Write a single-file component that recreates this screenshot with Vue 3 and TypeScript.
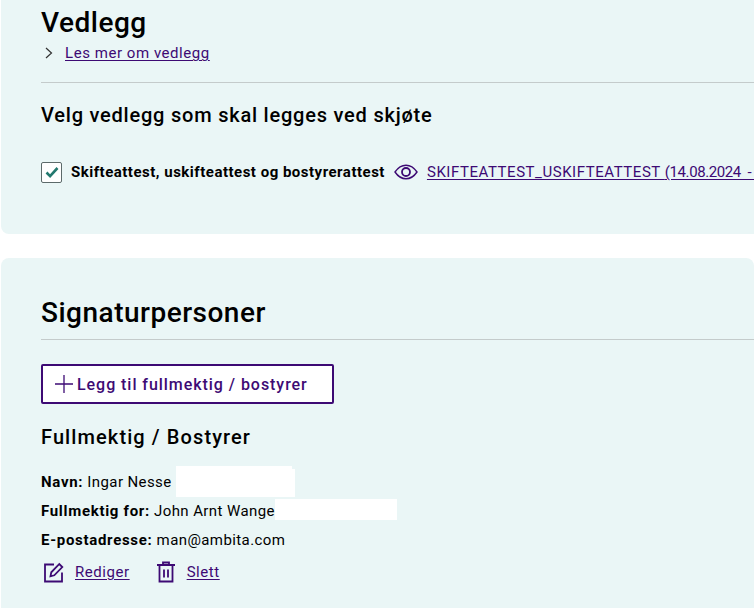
<script setup lang="ts">
const details = [
  { label: 'Navn:', value: 'Ingar Nesse', mask: 'mask-name' },
  { label: 'Fullmektig for:', value: 'John Arnt Wange', mask: 'mask-for' },
  { label: 'E-postadresse:', value: 'man@ambita.com', mask: '' },
]
</script>

<template>
  <main class="page">
    <section class="card card--attachments">
      <h2 class="title">Vedlegg</h2>
      <div class="more">
        <svg class="more__chevron" width="10" height="12" viewBox="0 0 10 12" fill="none">
          <path d="M2 1l5.5 5L2 11" stroke="#333" stroke-width="1.2" />
        </svg>
        <a class="link" href="#">Les mer om vedlegg</a>
      </div>
      <hr class="rule rule--attachments" />
      <h3 class="subtitle">Velg vedlegg som skal legges ved skjøte</h3>
      <div class="attachment">
        <span class="check">
          <svg width="14" height="12" viewBox="0 0 14 12" fill="none">
            <path d="M1.5 6.5l3.6 3.6L12.5 2" stroke="#23796f" stroke-width="2.6" />
          </svg>
        </span>
        <strong class="attachment__label">Skifteattest, uskifteattest og bostyrerattest</strong>
        <svg class="eye" width="24" height="16" viewBox="0 0 24 16" fill="none" stroke="#3d0a74">
          <path d="M1 8c3-4.400 6.800-6.800 11-6.800S20 3.600 23 8c-3 4.400-6.800 6.800-11 6.800S4 12.400 1 8z" stroke-width="1.400" />
          <circle cx="12" cy="8" r="4" stroke-width="1.800" />
        </svg>
        <a class="link link--file" href="#">SKIFTEATTEST_USKIFTEATTEST <span class="link__date">(14.08.2024 &nbsp;- 10.32.pdf)</span></a>
      </div>
    </section>

    <section class="card card--signers">
      <h2 class="title">Signaturpersoner</h2>
      <hr class="rule" />
      <button class="add" type="button">
        <svg width="20" height="20" viewBox="0 0 20 20" stroke="#3d0a74" stroke-width="1.300">
          <path d="M10 1v18M1 10h18" />
        </svg>
        Legg til fullmektig / bostyrer
      </button>
      <h3 class="person">Fullmektig / Bostyrer</h3>
      <div class="details">
        <p v-for="row in details" :key="row.label" class="details__row">
          <strong class="details__label">{{ row.label }}</strong> {{ row.value }}
          <span v-if="row.mask" class="mask" :class="row.mask"></span>
        </p>
      </div>
      <div class="actions">
        <span class="action">
          <svg width="22" height="22" viewBox="0 0 22 22" fill="none" stroke="#3d0a74" stroke-width="1.800">
            <path d="M11 3.500H2v17h17v-9" />
            <path d="M7.500 15.300l.8-4 8-8.300 3 3-8 8.300z" />
          </svg>
          <a class="link" href="#">Rediger</a>
        </span>
        <span class="action">
          <svg width="21" height="22" viewBox="0 0 21 22" fill="none" stroke="#3d0a74" stroke-width="1.800">
            <path d="M1 4h18M7 4V1.500h6V4M3.500 4v16.500h13V4M8 8.500v8M12 8.500v8" />
          </svg>
          <a class="link" href="#">Slett</a>
        </span>
      </div>
    </section>
  </main>
</template>

<style>
html,
body {
  background: #fff;
  overflow: hidden;
}
</style>

<style scoped>
.page {
  width: 754px;
  height: 608px;
  overflow: hidden;
  padding-left: 1px;
  box-sizing: border-box;
  font-family: Roboto, "Liberation Sans", sans-serif;
  color: #000;
}

.card {
  background: #eaf6f6;
  padding-left: 40px;
  border-radius: 8px;
  overflow: hidden;
}

.card--attachments {
  height: 234px;
  border-radius: 0 0 0 8px;
  box-sizing: border-box;
}

.card--signers {
  margin-top: 24px;
  height: 360px;
  box-sizing: border-box;
}

.title {
  margin: 0;
  font-size: 28px;
  font-weight: 500;
  line-height: 32px;
  letter-spacing: 0.5px;
}

.card--attachments .title {
  padding-top: 7px;
}

.card--signers .title {
  padding-top: 39px;
}

.more {
  display: flex;
  align-items: center;
  gap: 11px;
  margin-top: 4px;
  padding-left: 3px;
  height: 20px;
}

.link {
  color: #3d0a74;
  font-size: 15px;
  letter-spacing: 0.55px;
  text-decoration: underline;
  text-decoration-thickness: 1px;
  text-underline-offset: 2px;
}

.link__date {
  letter-spacing: -0.4px;
}

.rule {
  margin: 10px 0 0;
  border: 0;
  border-top: 1px solid #c4cbcb;
}

.rule--attachments {
  margin-top: 19px;
}

.subtitle {
  margin: 20px 0 0;
  font-size: 20px;
  font-weight: 500;
  line-height: 24px;
  letter-spacing: 0.78px;
}

.attachment {
  display: flex;
  align-items: center;
  margin-top: 34px;
  white-space: nowrap;
  height: 22px;
}

.check {
  display: flex;
  align-items: center;
  justify-content: center;
  width: 19px;
  height: 19px;
  border: 1px solid #5c6a6a;
  border-radius: 2px;
  background: #fff;
  flex: none;
}

.attachment__label {
  margin-left: 9px;
  font-size: 15px;
  font-weight: 700;
  letter-spacing: 0.5px;
}

.eye {
  margin-left: 9px;
  flex: none;
}

.link--file {
  margin-left: 9px;
}

.add {
  display: flex;
  align-items: center;
  gap: 3px;
  margin-top: 24px;
  width: 293px;
  height: 40px;
  padding: 0 0 0 11px;
  border: 2px solid #3d0a74;
  border-radius: 2px;
  background: #fff;
  color: #3d0a74;
  font: 500 16px Roboto, "Liberation Sans", sans-serif;
  letter-spacing: 0.95px;
}

.person {
  margin: 20px 0 0;
  font-size: 20px;
  font-weight: 500;
  line-height: 26px;
  letter-spacing: 1.1px;
}

.details {
  margin-top: 22px;
}

.details__row {
  position: relative;
  margin: 0 0 9px;
  font-size: 15px;
  line-height: 20px;
  letter-spacing: 0.4px;
}

.details__label {
  letter-spacing: 0.7px;
}

.mask {
  position: absolute;
  background: #fff;
}

.mask-name {
  left: 135px;
  top: -6px;
  width: 119px;
  height: 31px;
  clip-path: polygon(0 0, 116px 0, 116px 3px, 100% 3px, 100% 100%, 0 100%);
}

.mask-for {
  left: 234px;
  top: -2px;
  width: 122px;
  height: 21px;
}

.actions {
  display: flex;
  gap: 26px;
  margin-top: 11px;
  padding-left: 2px;
}

.action {
  display: flex;
  align-items: center;
  gap: 10px;
}
</style>
